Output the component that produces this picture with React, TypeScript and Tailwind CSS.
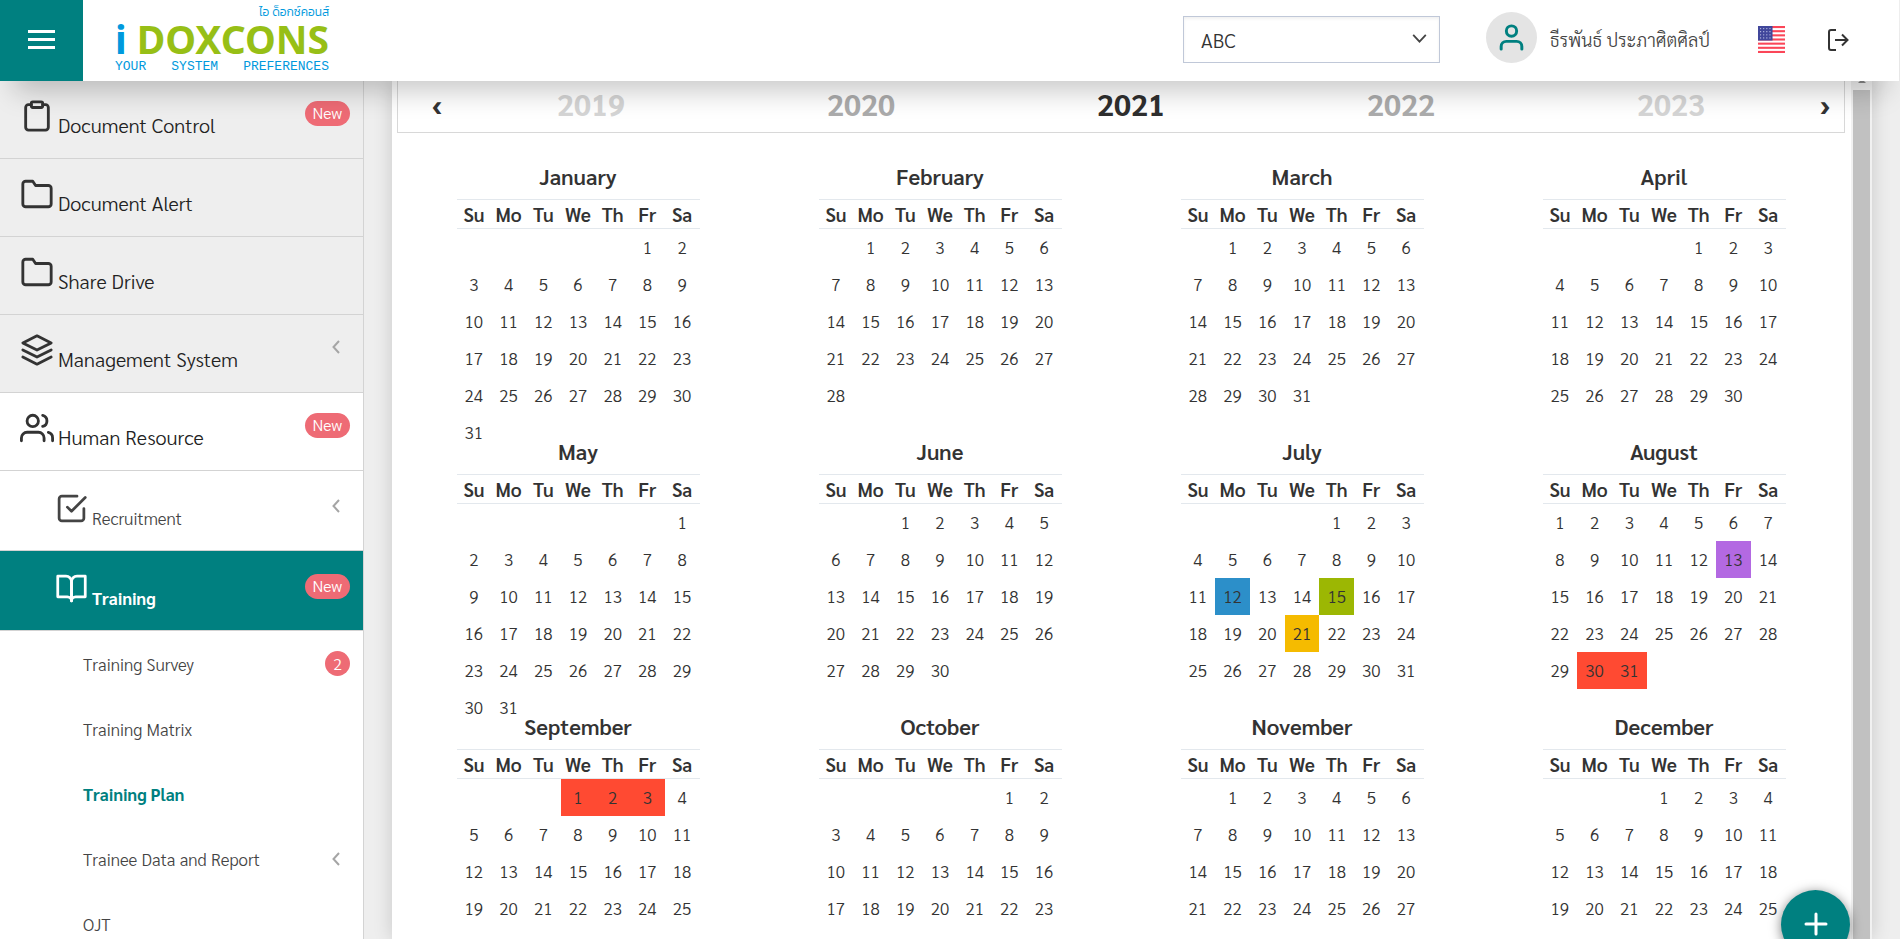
import type { ReactNode } from "react";

const WEEKDAYS = ["Su", "Mo", "Tu", "We", "Th", "Fr", "Sa"];

const MONTHS = [
  "January", "February", "March", "April", "May", "June",
  "July", "August", "September", "October", "November", "December",
];

const YEAR = 2021;

const YEARS = [
  { value: 2019, tone: "text-[#d5d5d5]" },
  { value: 2020, tone: "text-[#acacac]" },
  { value: 2021, tone: "text-[#2f2f2f]" },
  { value: 2022, tone: "text-[#acacac]" },
  { value: 2023, tone: "text-[#d5d5d5]" },
];

// Training events, keyed by "month-day" with a zero-based month.
const EVENTS: Record<string, string> = {
  "6-12": "bg-[#2c8fc9]",
  "6-15": "bg-[#9cb703]",
  "6-21": "bg-[#f5bb00]",
  "7-13": "bg-[#b369e2]",
  "7-30": "bg-[#ff4a32]",
  "7-31": "bg-[#ff4a32]",
  "8-1": "bg-[#ff4a32]",
  "8-2": "bg-[#ff4a32]",
  "8-3": "bg-[#ff4a32]",
};

function weeksOf(month: number): (number | null)[][] {
  const offset = new Date(YEAR, month, 1).getDay();
  const length = new Date(YEAR, month + 1, 0).getDate();
  const weeks: (number | null)[][] = [];
  for (let start = 1 - offset; start <= length; start += 7) {
    weeks.push(
      WEEKDAYS.map((_, i) => {
        const day = start + i;
        return day >= 1 && day <= length ? day : null;
      }),
    );
  }
  return weeks;
}

function Icon({ className, width = 2, children }: { className: string; width?: number; children: ReactNode }) {
  return (
    <svg
      viewBox="0 0 24 24"
      fill="none"
      stroke="currentColor"
      strokeWidth={width}
      strokeLinecap="round"
      strokeLinejoin="round"
      aria-hidden="true"
      className={className}
    >
      {children}
    </svg>
  );
}

const clipboard = (
  <>
    <path d="M16 4h2a2 2 0 0 1 2 2v14a2 2 0 0 1-2 2H6a2 2 0 0 1-2-2V6a2 2 0 0 1 2-2h2" />
    <rect x="8" y="2" width="8" height="4" rx="1" ry="1" />
  </>
);
const folder = <path d="M22 19a2 2 0 0 1-2 2H4a2 2 0 0 1-2-2V5a2 2 0 0 1 2-2h5l2 3h9a2 2 0 0 1 2 2z" />;
const layers = (
  <>
    <polygon points="12 2 2 7 12 12 22 7 12 2" />
    <polyline points="2 17 12 22 22 17" />
    <polyline points="2 12 12 17 22 12" />
  </>
);
const users = (
  <>
    <path d="M17 21v-2a4 4 0 0 0-4-4H5a4 4 0 0 0-4 4v2" />
    <circle cx="9" cy="7" r="4" />
    <path d="M23 21v-2a4 4 0 0 0-3-3.87" />
    <path d="M16 3.13a4 4 0 0 1 0 7.75" />
  </>
);
const checkSquare = (
  <>
    <polyline points="9 11 12 14 22 4" />
    <path d="M21 12v7a2 2 0 0 1-2 2H5a2 2 0 0 1-2-2V5a2 2 0 0 1 2-2h11" />
  </>
);
const bookOpen = (
  <>
    <path d="M2 3h6a4 4 0 0 1 4 4v14a3 3 0 0 0-3-3H2z" />
    <path d="M22 3h-6a4 4 0 0 0-4 4v14a3 3 0 0 1 3-3h7z" />
  </>
);

function Chevron() {
  return (
    <svg viewBox="0 0 8 14" className="mr-[10px] h-[14px] w-2" fill="none" stroke="#a5a5a5" strokeWidth="2" aria-hidden="true">
      <path d="M7 1 1.5 7 7 13" />
    </svg>
  );
}

function Badge({ children }: { children: ReactNode }) {
  return (
    <span className="flex h-[25px] min-w-[25px] items-center justify-center rounded-full bg-[#ee6b75] px-2 text-[16px] leading-none font-light text-white">
      {children}
    </span>
  );
}

type Extra = "new" | "more" | "2";

function Trailing({ kind }: { kind?: Extra }) {
  if (!kind) return null;
  return (
    <span className="flex h-7 items-center">
      {kind === "more" ? <Chevron /> : <Badge>{kind === "new" ? "New" : kind}</Badge>}
    </span>
  );
}

const TOP_ITEMS: { label: string; icon: ReactNode; extra?: Extra; open?: boolean }[] = [
  { label: "Document Control", icon: clipboard, extra: "new" },
  { label: "Document Alert", icon: folder },
  { label: "Share Drive", icon: folder },
  { label: "Management System", icon: layers, extra: "more" },
  { label: "Human Resource", icon: users, extra: "new", open: true },
];

const SUB_ITEMS: { label: string; icon: ReactNode; extra?: Extra; active?: boolean }[] = [
  { label: "Recruitment", icon: checkSquare, extra: "more" },
  { label: "Training", icon: bookOpen, extra: "new", active: true },
];

const LEAF_ITEMS: { label: string; extra?: Extra; active?: boolean }[] = [
  { label: "Training Survey", extra: "2" },
  { label: "Training Matrix" },
  { label: "Training Plan", active: true },
  { label: "Trainee Data and Report", extra: "more" },
  { label: "OJT" },
];

function Sidebar() {
  return (
    <nav className="w-[364px] shrink-0 overflow-hidden border-r border-[#d3d3d3] bg-white">
      {TOP_ITEMS.map((item) => (
        <a
          key={item.label}
          href="#"
          className={`flex h-[78px] items-start justify-between border-b border-[#d3d3d3] pt-[18px] pr-[13px] pl-5 text-[#222] ${item.open ? "bg-white" : "bg-[#eee]"}`}
        >
          <span className="flex items-baseline gap-1 text-[20px] leading-6 font-light">
            <Icon className="size-[34px] text-[#333]">{item.icon}</Icon>
            {item.label}
          </span>
          <Trailing kind={item.extra} />
        </a>
      ))}
      {SUB_ITEMS.map((item) => (
        <a
          key={item.label}
          href="#"
          className={`flex h-[80px] items-start justify-between border-b border-[#d3d3d3] pt-[21px] pr-[13px] pl-[55px] ${item.active ? "bg-[#008080] font-bold text-white" : "font-light text-[#444]"}`}
        >
          <span className="flex items-baseline gap-1 text-[17px] leading-6">
            <Icon className="size-[33px]">{item.icon}</Icon>
            {item.label}
          </span>
          <Trailing kind={item.extra} />
        </a>
      ))}
      {LEAF_ITEMS.map((item) => (
        <a
          key={item.label}
          href="#"
          className={`flex h-[65px] items-center justify-between pr-[13px] pl-[83px] text-[17px] leading-6 ${item.active ? "font-bold text-[#008080]" : "font-light text-[#444]"}`}
        >
          {item.label}
          <Trailing kind={item.extra} />
        </a>
      ))}
    </nav>
  );
}

function Logo() {
  return (
    <a href="#" className="ml-8 flex w-[214px] flex-col text-[#0099dd]">
      <span className="self-end font-['Kanit','Noto_Sans_Thai',sans-serif] text-[12px] leading-[12px] font-light">ไอ ด็อกซ์คอนส์</span>
      <span className="flex items-center justify-between font-['Noto_Sans','Open_Sans',sans-serif] text-[39px] leading-[41px] font-bold">
        <span>i</span>
        <span className="text-[#97bf16]">DOXCONS</span>
      </span>
      <span className="flex justify-between font-['Liberation_Mono',monospace] text-[13px] leading-[16px]">
        <span>YOUR</span>
        <span>SYSTEM</span>
        <span>PREFERENCES</span>
      </span>
    </a>
  );
}

function UsFlag() {
  return (
    <svg viewBox="0 0 26 26" className="size-[27px]" role="img" aria-label="English">
      <rect width="26" height="26" fill="#fff" />
      {[0, 4, 8, 12, 16, 20, 24].map((y) => (
        <rect key={y} y={y} width="26" height="2" fill="#fb4658" />
      ))}
      <rect width="14" height="14" fill="#41479b" />
      {[2, 5, 8, 11].map((y) =>
        [2, 5, 8, 11].map((x) => <circle key={`${x}-${y}`} cx={x + 0.5} cy={y + 0.5} r="0.6" fill="#c5c8ea" />),
      )}
    </svg>
  );
}

function Header() {
  return (
    <header className="relative z-10 mr-px flex h-[81px] shrink-0 items-center bg-white shadow-[0_24px_28px_-14px_rgba(0,0,0,0.22)]">
      <button type="button" aria-label="Toggle menu" className="flex h-full w-[83px] flex-col items-center justify-center gap-[5px] bg-[#008080] pb-[3px]">
        <span className="h-[3px] w-[27px] bg-white" />
        <span className="h-[3px] w-[27px] bg-white" />
        <span className="h-[3px] w-[27px] bg-white" />
      </button>
      <Logo />
      <div className="ml-auto flex items-center pr-[50px] pb-[2px]">
        <div className="relative">
          <select
            aria-label="Company"
            defaultValue="ABC"
            className="h-[47px] w-[257px] appearance-none border border-[#c0c8d8] bg-white pl-[17px] text-[20px] font-light text-[#333] shadow-[inset_0_2px_3px_rgba(0,0,0,0.06)]"
          >
            <option>ABC</option>
          </select>
          <svg viewBox="0 0 16 10" className="pointer-events-none absolute top-[18px] right-[13px] h-[9px] w-[15px]" fill="none" stroke="#444" strokeWidth="2" aria-hidden="true">
            <path d="M1 1 8 8.5 15 1" />
          </svg>
        </div>
        <span className="mb-1 ml-[46px] flex size-[51px] items-center justify-center rounded-full bg-[#e4e4e4] text-[#008080]">
          <Icon className="size-[31px]" width={2.3}>
            <path d="M20 21v-2a4 4 0 0 0-4-4H8a4 4 0 0 0-4 4v2" />
            <circle cx="12" cy="7" r="4" />
          </Icon>
        </span>
        <span className="ml-[13px] text-[18px] leading-6 font-light text-[#444]">ธีรพันธ์ ประภาศิตศิลป์</span>
        <button type="button" aria-label="Language" className="ml-[48px]">
          <UsFlag />
        </button>
        <button type="button" aria-label="Log out" className="ml-[42px] text-[#333]">
          <svg viewBox="0 0 22 22" className="size-[22px]" fill="none" stroke="currentColor" strokeWidth="2" aria-hidden="true">
            <path d="M9 1H4a2 2 0 0 0-2 2v16a2 2 0 0 0 2 2h5" />
            <path d="M8 11h12M15 5.5l5.5 5.5-5.5 5.5" />
          </svg>
        </button>
      </div>
    </header>
  );
}

function YearBar() {
  return (
    <div className="flex h-[52px] items-center border border-t-0 border-[#d8d8d8] pb-[6px] pl-5">
      <button type="button" aria-label="Previous year" className="w-[38px] text-[30px] leading-none font-bold text-[#333]">
        ‹
      </button>
      <div className="grid flex-1 grid-cols-5">
        {YEARS.map((y) => (
          <button key={y.value} type="button" className={`text-[30px] leading-8 font-bold ${y.tone}`}>
            {y.value}
          </button>
        ))}
      </div>
      <button type="button" aria-label="Next year" className="w-[38px] text-[30px] leading-none font-bold text-[#333]">
        ›
      </button>
    </div>
  );
}

function Month({ index }: { index: number }) {
  return (
    <section className="flex h-[275px] justify-center">
      <table className="h-fit w-[243px] table-fixed border-collapse text-center text-[#333]">
        <caption className="h-11 text-[22px] leading-[42px] font-semibold">{MONTHS[index]}</caption>
        <thead>
          <tr className="h-[29px] border-y border-[#e3e8ed]">
            {WEEKDAYS.map((d) => (
              <th key={d} className="p-0 text-[19px] leading-6 font-semibold">
                {d}
              </th>
            ))}
          </tr>
        </thead>
        <tbody>
          {weeksOf(index).map((week, w) => (
            <tr key={w} className="h-[37px]">
              {week.map((day, d) => (
                <td key={d} className={`p-0 text-[17px] leading-6 font-light ${day ? (EVENTS[`${index}-${day}`] ?? "") : ""}`}>
                  {day}
                </td>
              ))}
            </tr>
          ))}
        </tbody>
      </table>
    </section>
  );
}

export default function App() {
  return (
    <div className="flex h-screen flex-col overflow-hidden bg-[#eee] font-['Sarabun','Noto_Sans_Thai','Noto_Sans',sans-serif]">
      <Header />
      <div className="flex min-h-0 flex-1">
        <Sidebar />
        <main className="mr-7 ml-7 flex min-w-0 flex-1 overflow-visible bg-white shadow-[0_0_18px_rgba(0,0,0,0.16)]">
          <div className="min-w-0 flex-1 overflow-hidden pr-[6px] pl-[5px]">
            <YearBar />
            <div className="grid grid-cols-4 pt-[22px]">
              {MONTHS.map((name, i) => (
                <Month key={name} index={i} />
              ))}
            </div>
          </div>
          <div className="flex w-[21px] flex-col items-center bg-[#f1f1f1]">
            <svg viewBox="0 0 10 9" className="h-[9px] w-[10px]" aria-hidden="true">
              <path d="M3 0h4l2 2H1z" fill="#888" />
            </svg>
            <div className="w-[17px] flex-1 bg-[#c1c1c1]" />
          </div>
        </main>
      </div>
      <button
        type="button"
        aria-label="Add training plan"
        className="fixed right-[50px] -bottom-5 z-20 flex size-[69px] items-center justify-center rounded-full bg-[#008080] pb-[2px] text-white shadow-[0_2px_12px_rgba(0,0,0,0.5)]"
      >
        <Icon className="size-[30px]" width={2.4}>
          <path d="M12 4v16M4 12h16" />
        </Icon>
      </button>
    </div>
  );
}
